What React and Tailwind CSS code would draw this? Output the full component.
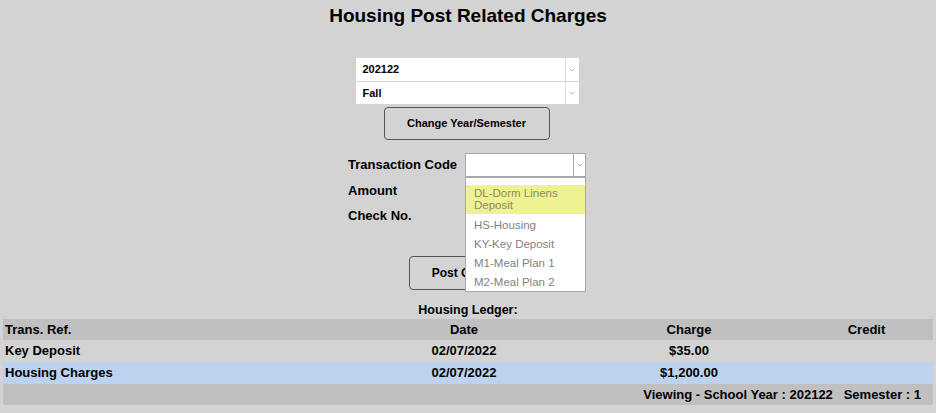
import { ChevronDown } from 'lucide-react';

const options = ['DL-Dorm Linens Deposit', 'HS-Housing', 'KY-Key Deposit', 'M1-Meal Plan 1', 'M2-Meal Plan 2'];

const rows = [
  { ref: 'Key Deposit', date: '02/07/2022', charge: '$35.00', credit: '', bg: 'bg-[#d3d3d3]' },
  { ref: 'Housing Charges', date: '02/07/2022', charge: '$1,200.00', credit: '', bg: 'bg-[#bcd2ee]' },
];

function TermSelect({ value, h }) {
  return (
    <div className={`flex w-[223px] ${h} bg-white`}>
      <div className="flex-1 flex items-center pl-[7px] text-[11px] font-bold text-black">{value}</div>
      <div className="w-[1px] bg-[#dcdcdc]" />
      <div className="w-[13px] flex items-center justify-center">
        <ChevronDown className="w-[8px] h-[8px] text-[#9a9a9a]" strokeWidth={2} />
      </div>
    </div>
  );
}

export default function App() {
  return (
    <div className="w-[936px] h-[413px] bg-[#d3d3d3] overflow-hidden text-black" style={{ fontFamily: '"Liberation Sans", Arial, sans-serif' }}>
      <div className="flex flex-col items-center">
        <h1 className="mt-[4px] h-[24px] leading-[24px] text-[19px] font-bold">Housing Post Related Charges</h1>

        {/* year / semester */}
        <div className="mt-[30px] flex flex-col gap-[1px] -ml-[2px]">
          <TermSelect value="202122" h="h-[23px]" />
          <TermSelect value="Fall" h="h-[22px]" />
        </div>
        <button className="mt-[3px] w-[166px] h-[33px] rounded-[4px] border border-[#555] bg-[#d3d3d3] text-[11px] font-bold -ml-[3px]">
          Change Year/Semester
        </button>

        {/* charge form */}
        <div className="relative mt-[12px] w-[238px] -ml-[2px]">
          <div className="flex items-center h-[25px]">
            <div className="w-[117px] text-[13px] font-bold">Transaction Code</div>
            <div className="flex w-[121px] h-[24px] bg-white border border-[#a9a9a9]">
              <div className="flex-1" />
              <div className="w-[1px] bg-[#a9a9a9]" />
              <div className="w-[11px] flex items-center justify-center">
                <ChevronDown className="w-[8px] h-[8px] text-[#8a8a8a]" strokeWidth={2} />
              </div>
            </div>
          </div>
          <div className="flex items-center h-[26px] pt-[2px]">
            <div className="w-[117px] text-[13px] font-bold">Amount</div>
          </div>
          <div className="flex items-center h-[26px]">
            <div className="w-[117px] text-[13px] font-bold">Check No.</div>
          </div>

          <div className="flex justify-center mt-[27px]">
            <button className="w-[116px] h-[34px] rounded-[4px] border border-[#555] bg-[#d3d3d3] text-[12px] font-bold">
              Post Charge
            </button>
          </div>

          {/* open list */}
          <div className="absolute left-[117px] top-[25px] w-[121px] h-[115px] bg-white border border-[#a9a9a9] pt-[7px]">
            {options.map((o, i) => (
              <div
                key={o}
                className={
                  i === 0
                    ? 'bg-[#eef293] text-[#8c8c5e] px-[8px] pt-[2px] pb-[3px] text-[11.5px] leading-[12px] mb-[2px]'
                    : 'text-[#7f7f7f] px-[8px] h-[19px] flex items-center text-[11.5px]'
                }
              >
                {o}
              </div>
            ))}
          </div>
        </div>

        <div className="mt-[12px] h-[16px] leading-[16px] text-[12.5px] font-bold">Housing Ledger:</div>
      </div>

      {/* ledger */}
      <div className="mx-[3px] mt-[1px] text-[13px] font-bold">
        <div className="grid grid-cols-[321px_280px_170px_1fr] h-[21px] items-center bg-[#c0c0c0]">
          <div className="pl-[2px]">Trans. Ref.</div>
          <div className="text-center">Date</div>
          <div className="text-center">Charge</div>
          <div className="text-center pl-[26px]">Credit</div>
        </div>
        {rows.map((r) => (
          <div key={r.ref} className={`grid grid-cols-[321px_280px_170px_1fr] h-[22px] items-center ${r.bg}`}>
            <div className="pl-[2px]">{r.ref}</div>
            <div className="text-center">{r.date}</div>
            <div className="text-center">{r.charge}</div>
            <div className="text-center pl-[26px]">{r.credit}</div>
          </div>
        ))}
        <div className="h-[21px] bg-[#c0c0c0] flex items-center justify-end pr-[12px] whitespace-pre">
          Viewing - School Year : 202122   Semester : 1
        </div>
      </div>
    </div>
  );
}
